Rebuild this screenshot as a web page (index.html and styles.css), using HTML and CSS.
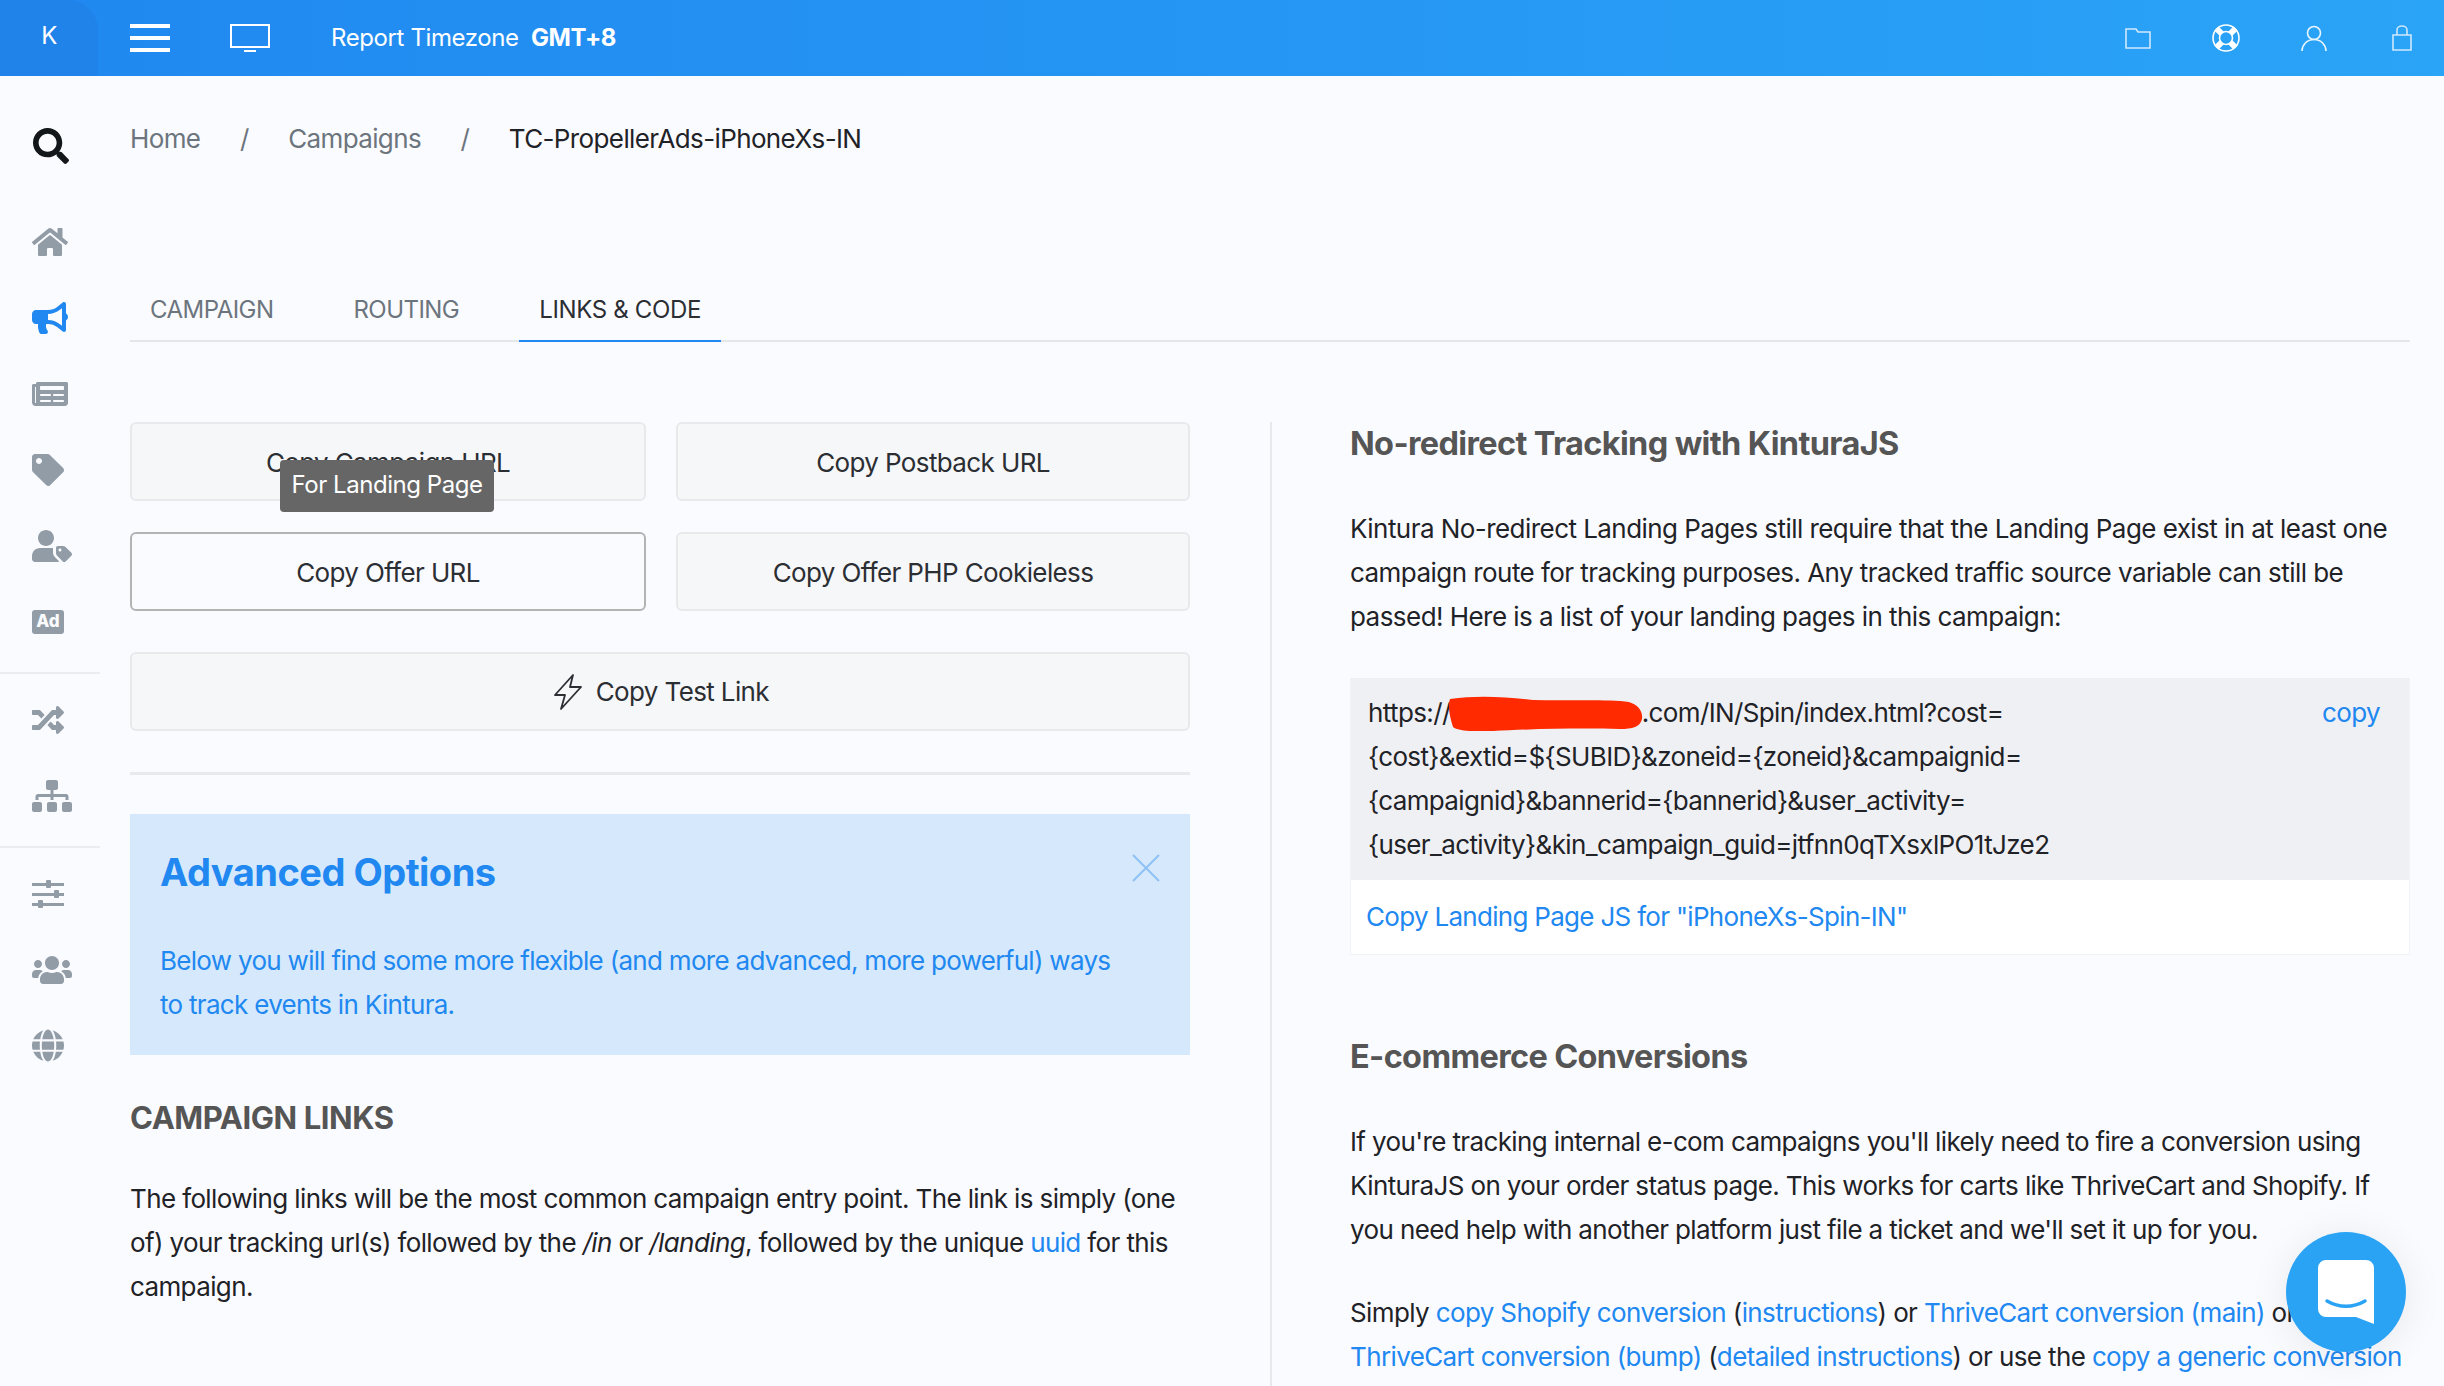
FILE: index.html
```html
<!DOCTYPE html>
<html lang="en">
<head>
  <meta charset="UTF-8">
  <title>Kintura - TC-PropellerAds-iPhoneXs-IN</title>
  <link rel="stylesheet" href="styles.css">
</head>
<body>

  <header class="topbar">
    <div class="brand">K</div>
    <svg class="menu-icon" viewBox="0 0 40 28"><path d="M0 0h40v4H0zM0 12h40v4H0zM0 24h40v4H0z" fill="#fff"/></svg>
    <svg class="screen-icon" viewBox="0 0 40 28"><path d="M1 1h38v22H1zM14 27h12" fill="none" stroke="#fff" stroke-width="2"/></svg>
    <div class="timezone">Report Timezone <b>GMT+8</b></div>
    <div class="top-icons">
      <svg class="folder-icon" viewBox="0 0 26 21"><path d="M1 1h10l2 3h12v16H1z" fill="none" stroke="#cfe8fd" stroke-width="1.6"/></svg>
      <svg class="buoy-icon" viewBox="0 0 28 28"><circle cx="14" cy="14" r="13" fill="none" stroke="#fff" stroke-width="1.6"/><circle cx="14" cy="14" r="6.500" fill="none" stroke="#fff" stroke-width="1.6"/><path d="M4.500 4.500l5 5M23.500 4.500l-5 5M4.500 23.500l5-5M23.500 23.500l-5-5" stroke="#fff" stroke-width="6" fill="none"/></svg>
      <svg class="user-icon" viewBox="0 0 26 26"><circle cx="13" cy="8" r="6.5" fill="none" stroke="#eaf5fe" stroke-width="1.6"/><path d="M1 26c0-6 5-11.500 12-11.500S25 20 25 26" fill="none" stroke="#eaf5fe" stroke-width="1.6"/></svg>
      <svg class="lock-icon" viewBox="0 0 20 26"><path d="M1 10h18v15H1zM5 10V5a5 4 0 0 1 10 0v5" fill="none" stroke="#cfe8fd" stroke-width="1.6"/></svg>
    </div>
  </header>

  <div class="layout">
    <nav class="sidebar">
      <div class="side-item search-item">
        <svg class="w36" viewBox="0 0 512 512"><path d="M505 442.700L405.300 343c-4.500-4.500-10.600-7-17-7H372c27.600-35.300 44-79.700 44-128C416 93.100 322.900 0 208 0S0 93.100 0 208s93.100 208 208 208c48.300 0 92.700-16.400 128-44v16.300c0 6.400 2.500 12.500 7 17l99.700 99.700c9.400 9.400 24.600 9.400 33.900 0l28.300-28.300c9.400-9.400 9.400-24.600.1-34zM208 336c-70.700 0-128-57.200-128-128 0-70.700 57.200-128 128-128 70.700 0 128 57.200 128 128 0 70.700-57.200 128-128 128z"/></svg>
      </div>

      <div class="side-group first-group">
        <div class="side-item">
          <svg class="w36" viewBox="0 0 576 512"><path d="M280.370 148.260L96 300.110V464a16 16 0 0 0 16 16l112.060-.29a16 16 0 0 0 15.920-16V368a16 16 0 0 1 16-16h64a16 16 0 0 1 16 16v95.640a16 16 0 0 0 16 16.050L464 480a16 16 0 0 0 16-16V300L295.670 148.260a12.190 12.190 0 0 0-15.300 0zM571.600 251.470L488 182.560V44.050a12 12 0 0 0-12-12h-56a12 12 0 0 0-12 12v72.610L318.470 43a48 48 0 0 0-61 0L4.340 251.470a12 12 0 0 0-1.600 16.900l25.500 31A12 12 0 0 0 45.150 301l235.220-193.740a12.190 12.190 0 0 1 15.300 0L530.900 301a12 12 0 0 0 16.900-1.600l25.500-31a12 12 0 0 0-1.700-16.930z"/></svg>
        </div>
        <div class="side-item active">
          <svg class="w36" viewBox="0 0 576 512"><path d="M576 240c0-23.630-12.950-44.040-32-55.120V32.010C544 23.260 537.020 0 512 0c-7.120 0-14.190 2.380-19.980 7.020l-85.030 68.030C364.280 109.190 310.660 128 256 128H64c-35.350 0-64 28.650-64 64v96c0 35.350 28.650 64 64 64h33.700c-1.390 10.480-2.180 21.140-2.180 32 0 39.770 9.260 77.350 25.560 110.940 5.190 10.690 16.520 17.060 28.400 17.060h74.280c26.050 0 41.690-29.840 25.900-50.560-16.400-21.520-26.150-48.360-26.150-77.440 0-11.110 1.620-21.790 4.410-32H256c54.660 0 108.280 18.810 150.980 52.950l85.030 68.030a32.023 32.023 0 0 0 19.980 7.020c24.920 0 32-22.780 32-32V295.130C563.050 284.040 576 263.630 576 240zm-96 141.420l-33.050-26.440C392.950 311.780 325.120 288 256 288v-96c69.120 0 136.950-23.780 190.950-66.980L480 98.580v282.840z"/></svg>
        </div>
        <div class="side-item">
          <svg class="w36" viewBox="0 0 576 512"><path d="M552 64H88c-13.255 0-24 10.745-24 24v8H24c-13.255 0-24 10.745-24 24v272c0 30.928 25.072 56 56 56h472c26.510 0 48-21.490 48-48V88c0-13.255-10.745-24-24-24zM56 400a8 8 0 0 1-8-8V144h16v248a8 8 0 0 1-8 8zm236-16H140c-6.627 0-12-5.373-12-12v-8c0-6.627 5.373-12 12-12h152c6.627 0 12 5.373 12 12v8c0 6.627-5.373 12-12 12zm208 0H348c-6.627 0-12-5.373-12-12v-8c0-6.627 5.373-12 12-12h152c6.627 0 12 5.373 12 12v8c0 6.627-5.373 12-12 12zm-208-96H140c-6.627 0-12-5.373-12-12v-8c0-6.627 5.373-12 12-12h152c6.627 0 12 5.373 12 12v8c0 6.627-5.373 12-12 12zm208 0H348c-6.627 0-12-5.373-12-12v-8c0-6.627 5.373-12 12-12h152c6.627 0 12 5.373 12 12v8c0 6.627-5.373 12-12 12zm0-96H140c-6.627 0-12-5.373-12-12v-40c0-6.627 5.373-12 12-12h360c6.627 0 12 5.373 12 12v40c0 6.627-5.373 12-12 12z"/></svg>
        </div>
        <div class="side-item">
          <svg class="w32" viewBox="0 0 512 512"><path d="M0 252.118V48C0 21.490 21.490 0 48 0h204.118a48 48 0 0 1 33.941 14.059l211.882 211.882c18.745 18.745 18.745 49.137 0 67.882L293.823 497.941c-18.745 18.745-49.137 18.745-67.882 0L14.059 286.059A48 48 0 0 1 0 252.118zM112 64c-26.510 0-48 21.490-48 48s21.490 48 48 48 48-21.490 48-48-21.490-48-48-48z"/></svg>
        </div>
        <div class="side-item">
          <svg class="w40" viewBox="0 0 640 512"><path d="M630.600 364.900l-90.300-90.200c-12-12-28.300-18.700-45.300-18.700h-79.300c-17.700 0-32 14.300-32 32v79.200c0 17 6.700 33.200 18.700 45.200l90.300 90.200c12.500 12.500 32.800 12.500 45.300 0l92.500-92.500c12.600-12.400 12.600-32.700.1-45.200zm-182.800-21c-13.300 0-24-10.700-24-24s10.700-24 24-24 24 10.700 24 24c0 13.200-10.700 24-24 24zM224 256c70.700 0 128-57.300 128-128C352 57.300 294.700 0 224 0S96 57.300 96 128c0 70.600 57.300 128 128 128zM320 288H128C57 288 0 345 0 416v48c0 26.500 21.500 48 48 48h352c13 0 25-5 34-14l-68-68c-18-18-30-43-30-70v-72z"/></svg>
        </div>
        <div class="side-item"><span class="ad-badge">Ad</span></div>
      </div>

      <div class="side-group">
        <div class="side-item">
          <svg class="w32" viewBox="0 0 512 512"><path d="M504.971 359.029c9.373 9.373 9.373 24.569 0 33.941l-80 79.984c-15.010 15.010-40.971 4.490-40.971-16.971V416h-58.785a12.004 12.004 0 0 1-8.773-3.812l-70.556-75.596 53.333-57.143L352 336h32v-39.981c0-21.438 25.943-31.998 40.971-16.971l80 79.981zM12 176h84l52.781 56.551 53.333-57.143-70.556-75.596A11.999 11.999 0 0 0 122.785 96H12c-6.627 0-12 5.373-12 12v56c0 6.627 5.373 12 12 12zm372 0v39.984c0 21.460 25.961 31.980 40.971 16.971l80-79.984c9.373-9.373 9.373-24.569 0-33.941l-80-79.981C409.943 24.021 384 34.582 384 56.019V96h-58.785a12.004 12.004 0 0 0-8.773 3.812L96 336H12c-6.627 0-12 5.373-12 12v56c0 6.627 5.373 12 12 12h110.785c3.326 0 6.503-1.381 8.773-3.812L352 176h32z"/></svg>
        </div>
        <div class="side-item">
          <svg class="w40" viewBox="0 0 640 512"><path d="M128 352H32c-17.670 0-32 14.330-32 32v96c0 17.670 14.330 32 32 32h96c17.670 0 32-14.330 32-32v-96c0-17.670-14.330-32-32-32zm-24-80h192v48h48v-48h192v48h48v-57.590c0-21.170-17.230-38.410-38.410-38.410H344v-64h40c17.670 0 32-14.330 32-32V32c0-17.670-14.330-32-32-32H256c-17.670 0-32 14.330-32 32v96c0 17.670 14.330 32 32 32h40v64H94.410C73.230 224 56 241.230 56 262.410V320h48v-48zm264 80h-96c-17.670 0-32 14.330-32 32v96c0 17.670 14.330 32 32 32h96c17.670 0 32-14.330 32-32v-96c0-17.670-14.330-32-32-32zm240 0h-96c-17.670 0-32 14.330-32 32v96c0 17.670 14.330 32 32 32h96c17.670 0 32-14.330 32-32v-96c0-17.670-14.330-32-32-32z"/></svg>
        </div>
      </div>

      <div class="side-group last-group">
        <div class="side-item">
          <svg class="w32" viewBox="0 0 32 28"><path d="M0 3h32v3H0zM0 13h32v3H0zM0 23h32v3H0z"/><rect x="14" y="0" width="5" height="8" rx="1"/><rect x="22" y="10" width="5" height="8" rx="1"/><rect x="6" y="20" width="5" height="8" rx="1"/></svg>
        </div>
        <div class="side-item">
          <svg class="w40" viewBox="0 0 640 512"><path d="M96 224c35.300 0 64-28.700 64-64s-28.700-64-64-64-64 28.700-64 64 28.700 64 64 64zm448 0c35.300 0 64-28.700 64-64s-28.700-64-64-64-64 28.700-64 64 28.700 64 64 64zm32 32h-64c-17.600 0-33.500 7.100-45.100 18.600 40.300 22.100 68.900 62 75.100 109.400h66c17.700 0 32-14.300 32-32v-32c0-35.300-28.700-64-64-64zm-256 0c61.900 0 112-50.100 112-112S381.900 32 320 32 208 82.100 208 144s50.100 112 112 112zm76.800 32h-8.300c-20.800 10-43.900 16-68.500 16s-47.600-6-68.500-16h-8.300C179.600 288 128 339.600 128 403.200V432c0 26.500 21.500 48 48 48h288c26.500 0 48-21.500 48-48v-28.800c0-63.600-51.600-115.200-115.200-115.200zm-223.700-13.400C161.500 263.100 145.600 256 128 256H64c-35.300 0-64 28.700-64 64v32c0 17.700 14.300 32 32 32h65.900c6.300-47.400 34.900-87.300 75.200-109.400z"/></svg>
        </div>
        <div class="side-item">
          <svg class="w32" viewBox="0 0 496 512"><path d="M336.500 160C322 70.700 287.800 8 248 8s-74 62.700-88.500 152h177zM152 256c0 22.200 1.200 43.500 3.300 64h185.300c2.100-20.500 3.300-41.800 3.300-64s-1.200-43.500-3.300-64H155.300c-2.100 20.500-3.300 41.800-3.300 64zm324.700-96c-28.600-67.900-86.500-120.400-158-141.600 24.400 33.800 41.200 84.700 50 141.600h108zM177.200 18.400C105.800 39.600 47.800 92.100 19.300 160h108c8.700-56.900 25.500-107.800 49.900-141.600zM487.400 192H372.700c2.100 21 3.300 42.500 3.300 64s-1.200 43-3.300 64h114.600c5.500-20.500 8.600-41.800 8.600-64s-3.100-43.500-8.500-64zM120 256c0-21.500 1.200-43 3.300-64H8.600C3.200 212.500 0 233.800 0 256s3.200 43.500 8.600 64h114.600c-2-21-3.200-42.500-3.200-64zm39.500 96c14.500 89.300 48.700 152 88.500 152s74-62.700 88.500-152h-177zm159.300 141.600c71.400-21.200 129.400-73.700 158-141.600h-108c-8.800 56.900-25.600 107.800-50 141.600zM19.300 352c28.600 67.900 86.500 120.400 158 141.600-24.400-33.800-41.200-84.700-50-141.600h-108z"/></svg>
        </div>
      </div>
    </nav>

    <main class="content">
      <div class="breadcrumb">
        <a>Home</a><span class="sep">/</span><a>Campaigns</a><span class="sep">/</span><span class="current">TC-PropellerAds-iPhoneXs-IN</span>
      </div>

      <div class="tabs">
        <a class="tab">CAMPAIGN</a>
        <a class="tab">ROUTING</a>
        <a class="tab tab-active">LINKS &amp; CODE</a>
      </div>

      <div class="columns">
        <section class="col-left">
          <div class="btn-grid">
            <button class="btn">Copy Campaign URL<span class="tooltip">For Landing Page</span></button>
            <button class="btn">Copy Postback URL</button>
            <button class="btn btn-focus">Copy Offer URL</button>
            <button class="btn">Copy Offer PHP Cookieless</button>
          </div>
          <button class="btn btn-wide">
            <svg class="bolt" viewBox="0 0 30 36"><path d="M20 1L2 21h10L8 35l20-22H17z" fill="none" stroke="#2b2e33" stroke-width="1.800" stroke-linejoin="round"/></svg>
            Copy Test Link
          </button>
          <hr class="rule">

          <div class="alert">
            <h2>Advanced Options</h2>
            <svg class="alert-close" viewBox="0 0 28 28"><path d="M1 1l26 26M27 1L1 27" stroke="#8fc1f5" stroke-width="2" fill="none"/></svg>
            <p>Below you will find some more flexible (and more advanced, more powerful) ways to track events in Kintura.</p>
          </div>

          <h4 class="sub-title">CAMPAIGN LINKS</h4>
          <p>The following links will be the most common campaign entry point. The link is simply (one of) your tracking url(s) followed by the <i>/in</i> or <i>/landing</i>, followed by the unique <a class="link">uuid</a> for this campaign.</p>
        </section>

        <section class="col-right">
          <h3>No-redirect Tracking with KinturaJS</h3>
          <p class="intro">Kintura No-redirect Landing Pages still require that the Landing Page exist in at least one campaign route for tracking purposes. Any tracked traffic source variable can still be passed! Here is a list of your landing pages in this campaign:</p>

          <div class="code-card">
            <div class="code-block">
              <div>https://<svg class="redact" viewBox="0 0 194 36" preserveAspectRatio="none"><path d="M3 4C30 0 60 2 85 5c35 1 75-1 95 2 10 3 14 10 13 17-2 8-9 10-22 10-40-1-90 0-125 2-18 1-36 0-40-4C4 26 0 12 3 4z" fill="#ff2a00"/></svg>.com/IN/Spin/index.html?cost=<br>{cost}&amp;extid=${SUBID}&amp;zoneid={zoneid}&amp;campaignid=<br>{campaignid}&amp;bannerid={bannerid}&amp;user_activity=<br>{user_activity}&amp;kin_campaign_guid=jtfnn0qTXsxlPO1tJze2</div>
              <a class="link">copy</a>
            </div>
            <div class="code-foot"><a class="link">Copy Landing Page JS for "iPhoneXs-Spin-IN"</a></div>
          </div>

          <h3 class="second-title">E-commerce Conversions</h3>
          <p>If you're tracking internal e-com campaigns you'll likely need to fire a conversion using KinturaJS on your order status page. This works for carts like ThriveCart and Shopify. If you need help with another platform just file a ticket and we'll set it up for you.</p>
          <p class="next-para">Simply <a class="link">copy Shopify conversion</a> (<a class="link">instructions</a>) or <a class="link">ThriveCart conversion (main)</a> or <a class="link">ThriveCart conversion (bump)</a> (<a class="link">detailed instructions</a>) or use the <a class="link">copy a generic conversion</a></p>
        </section>
      </div>
    </main>
  </div>

  <div class="chat-bubble">
    <svg viewBox="0 0 56 64"><path d="M8 0h40a8 8 0 0 1 8 8v56l-18-7H8a8 8 0 0 1-8-8V8a8 8 0 0 1 8-8z" fill="#fff"/><path d="M9 41c12 7 26 7 38 0" fill="none" stroke="#2aa3f5" stroke-width="3.500" stroke-linecap="round"/></svg>
  </div>

</body>
</html>
```

FILE: styles.css
```css
* {
  box-sizing: border-box;
}
html, body {
  height: 100%;
}
body {
  margin: 0;
  background-color: #fafbff;
  color: #1f2226;
  font-family: Inter, "Liberation Sans", sans-serif;
  font-size: 26px;
  line-height: 44px;
  letter-spacing: -0.62px;
  overflow: hidden;
}
p {
  margin: 0;
}
.link {
  color: #2088f0;
}

/* top bar */
.topbar {
  display: flex;
  align-items: center;
  height: 76px;
  background: linear-gradient(90deg, #2088f0, #2aa4f7);
  color: white;
}
.brand {
  width: 98px;
  height: 76px;
  line-height: 71px;
  text-align: center;
  font-size: 24px;
  background-color: #1f83ea;
  border-radius: 0 30px 0 0;
}
.menu-icon {
  width: 40px;
  height: 28px;
  margin-left: 32px;
}
.screen-icon {
  width: 40px;
  height: 28px;
  margin-left: 60px;
}
.timezone {
  margin-left: 61px;
  font-size: 24px;
  line-height: 70px;
  letter-spacing: -0.4px;
}
.timezone b {
  margin-left: 6px;
}
.top-icons {
  display: flex;
  align-items: center;
  margin-left: auto;
  margin-right: 32px;
}
.folder-icon {
  width: 26px;
  height: 21px;
}
.buoy-icon {
  width: 28px;
  height: 28px;
  margin-left: 61px;
}
.user-icon {
  width: 26px;
  height: 26px;
  margin-left: 61px;
}
.lock-icon {
  width: 20px;
  height: 26px;
  margin-left: 65px;
}

/* sidebar */
.layout {
  display: flex;
}
.sidebar {
  flex: 0 0 100px;
  padding-top: 32px;
  color: #929ca6;
}
.side-item {
  display: flex;
  align-items: center;
  height: 76px;
  padding-left: 32px;
}
.side-item svg {
  fill: currentColor;
}
.search-item {
  height: 76px;
  margin-bottom: 20px;
  padding-left: 33px;
  color: #14171a;
}
.side-item.active {
  color: #2088f0;
}
.w32 {
  width: 32px;
}
.w36 {
  width: 36px;
}
.w40 {
  width: 40px;
}
.ad-badge {
  width: 32px;
  height: 24px;
  line-height: 23px;
  text-align: center;
  font-size: 17px;
  font-weight: 800;
  letter-spacing: 0;
  color: #fafbff;
  background-color: #929ca6;
  border-radius: 3px;
}
.side-group {
  padding-bottom: 12px;
  border-bottom: 2px solid #ebecf0;
  margin-bottom: 8px;
}
.last-group {
  border-bottom: none;
}

/* main area */
.content {
  flex: 1;
  padding: 41px 34px 0 30px;
}
.breadcrumb {
  color: #6c757d;
}
.sep {
  margin: 0 39.5px;
}
.current {
  color: #1f2226;
}
.tabs {
  display: flex;
  gap: 40px;
  margin-top: 115px;
  border-bottom: 2px solid #e4e6ea;
  font-size: 24px;
}
.tab {
  height: 66px;
  line-height: 68px;
  padding: 0 20px;
  color: #6c757d;
  margin-bottom: -2px;
  letter-spacing: -0.55px;
}
.tab-active {
  color: #2b2e33;
  border-bottom: 2px solid #2088f0;
  letter-spacing: -0.35px;
}
.columns {
  display: grid;
  grid-template-columns: 1142px 1138px;
  min-height: 970px;
  margin-top: 80px;
}
.col-left {
  padding-right: 80px;
  border-right: 2px solid #e8e9ed;
}
.col-right {
  padding-left: 78px;
}

/* buttons */
.btn-grid {
  display: grid;
  grid-template-columns: 516px 514px;
  gap: 31px 30px;
}
.btn {
  position: relative;
  height: 79px;
  padding-top: 2px;
  background-color: #f6f7f9;
  border: 2px solid #e8e9eb;
  border-radius: 6px;
  color: #2b2e33;
  font-family: inherit;
  font-size: 26px;
  letter-spacing: -0.62px;
}
.btn-focus {
  background-color: #fafbff;
  border-color: #b3b3b3;
}
.btn-wide {
  width: 100%;
  margin-top: 41px;
}
.bolt {
  width: 30px;
  height: 36px;
  margin-left: 2px;
  margin-right: 6px;
  vertical-align: -9px;
}
.tooltip {
  position: absolute;
  left: 148px;
  top: 36px;
  width: 214px;
  height: 52px;
  line-height: 50px;
  background-color: #666;
  border-radius: 4px;
  color: white;
  font-size: 24px;
  letter-spacing: -0.45px;
}
.rule {
  height: 3px;
  margin: 41px 0 39px;
  border: none;
  background-color: #e8e9eb;
}

/* alert */
.alert {
  position: relative;
  height: 241px;
  padding: 30px 70px 30px 30px;
  background-color: #d6e8fb;
  color: #2088f0;
}
.alert h2 {
  margin: 0 0 39px;
  font-size: 38px;
  line-height: 56px;
  font-weight: 700;
  letter-spacing: -0.5px;
}
.alert p {
  letter-spacing: -0.7px;
}
.alert-close {
  position: absolute;
  right: 30px;
  top: 40px;
  width: 28px;
  height: 28px;
}
.sub-title {
  margin: 41px 0 37px;
  font-size: 31px;
  line-height: 44px;
  font-weight: 700;
  color: #555;
  letter-spacing: -0.45px;
}

/* right column */
h3 {
  margin: 0 0 41px;
  font-size: 32.5px;
  line-height: 44px;
  font-weight: 700;
  color: #555;
  letter-spacing: -0.65px;
}
.intro {
  letter-spacing: -0.55px;
}
.code-card {
  margin-top: 39px;
  background-color: white;
  border: 1px solid #f2f3f6;
  border-top: none;
}
.code-block {
  display: flex;
  justify-content: space-between;
  padding: 13px 29px 13px 17px;
  background-color: #eff0f4;
}
.redact {
  width: 196px;
  height: 36px;
  margin-left: -4px;
  margin-right: -1px;
  vertical-align: -9px;
}
.code-foot {
  padding: 15px;
  letter-spacing: -0.7px;
}
.second-title {
  margin-top: 80px;
}
.next-para {
  margin-top: 39px;
}

/* chat launcher */
.chat-bubble {
  position: fixed;
  left: 2286px;
  top: 1232px;
  display: flex;
  justify-content: center;
  align-items: center;
  width: 120px;
  height: 120px;
  border-radius: 50%;
  background-color: #2aa3f5;
  box-shadow: 0 4px 40px rgba(0, 0, 0, 0.08);
}
.chat-bubble svg {
  width: 56px;
  height: 64px;
}
```
